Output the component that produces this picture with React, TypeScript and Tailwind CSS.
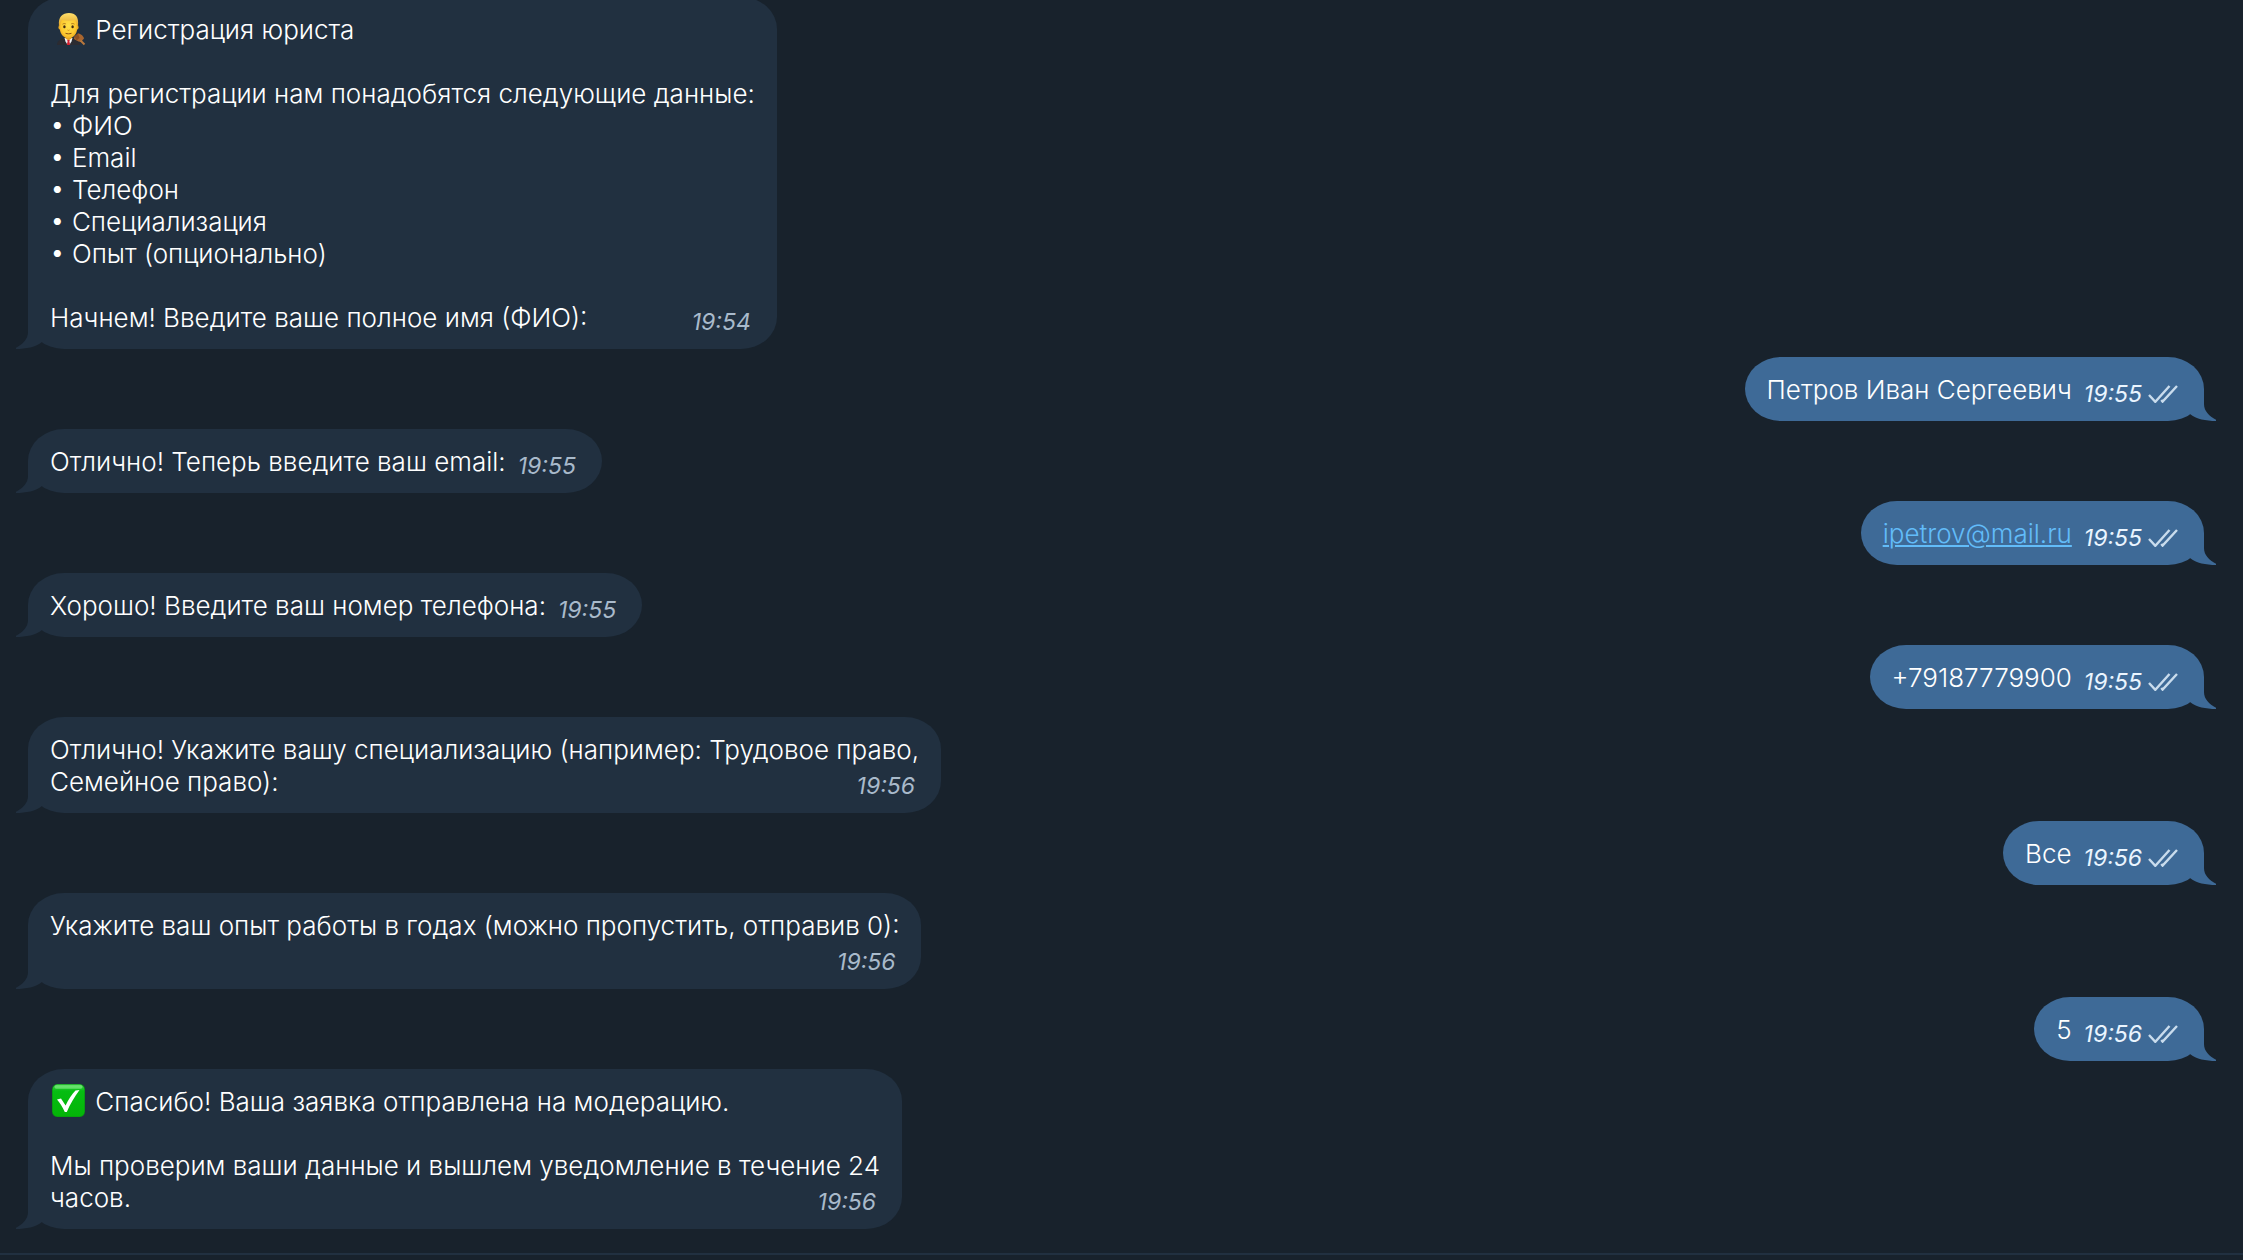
import React from 'react'
import clsx from 'clsx'

type Message = {
    text: string
    time: string
    out?: boolean
    icon?: 'judge' | 'done'
    href?: string
}

// an empty last line moves the time under the text
const messages: Message[] = [
    {
        icon: 'judge',
        text: 'Регистрация юриста\n\nДля регистрации нам понадобятся следующие данные:\n• ФИО\n• Email\n• Телефон\n• Специализация\n• Опыт (опционально)\n\nНачнем! Введите ваше полное имя (ФИО):',
        time: '19:54',
    },
    { text: 'Петров Иван Сергеевич', time: '19:55', out: true },
    { text: 'Отлично! Теперь введите ваш email:', time: '19:55' },
    { text: 'ipetrov@mail.ru', time: '19:55', out: true, href: 'mailto:ipetrov@mail.ru' },
    { text: 'Хорошо! Введите ваш номер телефона:', time: '19:55' },
    { text: '+79187779900', time: '19:55', out: true },
    {
        text: 'Отлично! Укажите вашу специализацию (например: Трудовое право,\nСемейное право):',
        time: '19:56',
    },
    { text: 'Все', time: '19:56', out: true },
    { text: 'Укажите ваш опыт работы в годах (можно пропустить, отправив 0):\n', time: '19:56' },
    { text: '5', time: '19:56', out: true },
    {
        icon: 'done',
        text: 'Спасибо! Ваша заявка отправлена на модерацию.\n\nМы проверим ваши данные и вышлем уведомление в течение 24\nчасов.',
        time: '19:56',
    },
]

function JudgeIcon() {
    return (
        <svg className='inline-block w-[38px] h-8 align-bottom overflow-visible' viewBox='0 0 38 32' aria-hidden='true'>
            <defs>
                <radialGradient id='face' cx='0.5' cy='0.45' r='0.6'>
                    <stop offset='0' stopColor='#ffe04a' />
                    <stop offset='0.7' stopColor='#fdc92f' />
                    <stop offset='1' stopColor='#e9a51f' />
                </radialGradient>
                <linearGradient id='hair' x1='0' y1='0' x2='0' y2='1'>
                    <stop offset='0' stopColor='#ffdf6b' />
                    <stop offset='1' stopColor='#e0a52c' />
                </linearGradient>
            </defs>
            <path d='M7 31 C7 27.5 9 26 13 24.5 H24 C27.5 25.5 29.5 28 30 31 Z' fill='#2b2b31' />
            <path d='M14.5 24 H22.5 L21.5 27.5 L19.3 31 H17.7 L15.5 27.5 Z' fill='#eef1f6' />
            <path d='M15.5 21 H21.5 V24.5 L18.5 26.5 L15.5 24.5 Z' fill='#e3a022' />
            <path d='M17.2 26 H19.8 L19.4 27.5 L20.2 31 H16.8 L17.6 27.5 Z' fill='#d3202f' />
            <ellipse cx='9.8' cy='13.2' rx='1.3' ry='2.2' fill='#efae25' />
            <ellipse cx='27.2' cy='13.2' rx='1.3' ry='2.2' fill='#efae25' />
            <path
                d='M9.8 9 C9.8 3.5 13 1.5 18.5 1.5 C24 1.5 27.2 3.5 27.2 9 V14 C27.2 20 23.5 24.2 18.5 24.2 C13.5 24.2 9.8 20 9.8 14 Z'
                fill='url(#face)'
            />
            <path
                d='M9 11.5 C8 3 12.5 -1 19 -1 C25.5 -1 29 3 28 11.5 L26.8 11.5 C27 8.8 26.3 7 25 6 C21 7 16 7 12 6 C10.6 7.2 10 9 10.2 11.5 Z'
                fill='url(#hair)'
            />
            <path d='M12.5 10.2 C13.5 9.4 14.8 9.4 15.8 9.9 M21.2 9.9 C22.2 9.4 23.5 9.4 24.5 10.2' fill='none' stroke='#a36b18' strokeWidth='0.8' />
            <ellipse cx='14.4' cy='12.8' rx='1.2' ry='1.5' fill='#3f2a12' />
            <ellipse cx='22.6' cy='12.8' rx='1.2' ry='1.5' fill='#3f2a12' />
            <path d='M17.5 16 C18.2 16.6 18.8 16.6 19.5 16' fill='none' stroke='#c98718' strokeWidth='0.8' />
            <path d='M15.5 19.3 C17.5 20 19.5 20 21.5 19.3' fill='none' stroke='#8a5312' strokeWidth='1' />
            <path d='M24.5 22.5 L28 19.5 C30.5 19.5 33.5 22 34 24.5 L31 28 L28.5 27.5 L24 25 Z' fill='#a9662f' />
            <path d='M24.5 22.5 L28 19.5 L29.5 24 L26.5 26.5 Z' fill='#8c4f22' />
            <path d='M30.5 26.5 L34.5 30.5' stroke='#b9783d' strokeWidth='2' />
        </svg>
    )
}

function DoneIcon() {
    return (
        <svg className='inline-block w-[38px] h-8 align-bottom overflow-visible' viewBox='0 0 38 32' aria-hidden='true'>
            <defs>
                <linearGradient id='done' x1='0' y1='0' x2='0' y2='1'>
                    <stop offset='0' stopColor='#3fd24a' />
                    <stop offset='0.2' stopColor='#06bd12' />
                    <stop offset='1' stopColor='#04b508' />
                </linearGradient>
            </defs>
            <rect x='2' y='-2' width='33' height='33' rx='5.5' fill='#0b8f14' />
            <rect x='2.7' y='-1.4' width='31.6' height='31.8' rx='5' fill='url(#done)' />
            <rect x='4.5' y='-0.8' width='28' height='3.6' rx='1.8' fill='#8df08f' opacity='0.6' />
            <path d='M7 13.5 L11 12.5 L15.6 19.5 C18.5 13.5 22 8 25.5 4.5 L29.5 4 C24.5 10.5 20 18.5 16.8 26 H14.8 C12.6 21.2 10 17 7 13.5 Z' fill='#fff' />
        </svg>
    )
}

function Ticks() {
    return (
        <svg className='w-[30px] h-[18px] ml-1.5' viewBox='0 0 30 18' fill='none' stroke='#c9dced' strokeWidth='2.4' aria-hidden='true'>
            <path d='M1 10 L7.3 16.8 L21.5 1' />
            <path d='M13.3 15 L14.6 16.6 L29 1' />
        </svg>
    )
}

function Tail({ out }: { out?: boolean }) {
    return (
        <svg
            className={clsx('absolute bottom-0 w-[26px] h-8', out ? '-right-3 -scale-x-100 fill-[#3e6a97]' : '-left-3 fill-[#213040]')}
            viewBox='0 0 26 32'
            aria-hidden='true'
        >
            <path d='M12 0 V15 C12 22 7 27 0 30.8 V32 C10 32 20 30 26 25 V0 Z' />
        </svg>
    )
}

function Bubble({ text, time, out, icon, href }: Message) {
    const lines = text.split('\n')
    const last = lines.length - 1

    return (
        <li
            className={clsx(
                'relative px-[22px] pt-[17px] pb-[15px] rounded-[36px/32px] text-white text-[26px] leading-8',
                out ? 'self-end bg-[#3e6a97]' : 'self-start bg-[#213040]'
            )}
        >
            <Tail out={out} />
            {lines.slice(0, last).map((line, i) => (
                <p key={i} className='relative min-h-8'>
                    {i === 0 && icon === 'judge' && <JudgeIcon />}
                    {i === 0 && icon === 'done' && <DoneIcon />}
                    {i === 0 && icon && ' '}
                    {line}
                </p>
            ))}
            <div className='relative flex items-end justify-between gap-3 min-h-8'>
                {href ? (
                    <a className='text-[#62bcf9] underline decoration-2 underline-offset-2' href={href}>{lines[last]}</a>
                ) : (
                    <p>{lines[last]}</p>
                )}
                <div className={clsx('flex items-center pr-1 text-[23px] leading-6 italic font-normal', out ? 'text-[#eaf5ff]' : 'text-[#a9bacb]')}>
                    <time>{time}</time>
                    {out && <Ticks />}
                </div>
            </div>
        </li>
    )
}

export default function App() {
    return (
        <div className="flex flex-col h-screen bg-[#18222c] font-['Inter',sans-serif] font-light">
            <main className='flex flex-col justify-end flex-1 min-h-0 overflow-hidden'>
                <ul className='flex flex-col gap-2 pl-7 pr-[39px] pb-6'>
                    {messages.map((m, i) => <Bubble key={i} {...m} />)}
                </ul>
            </main>
            <footer className='h-[7px] border-t-2 border-[#213040]' />
        </div>
    )
}
